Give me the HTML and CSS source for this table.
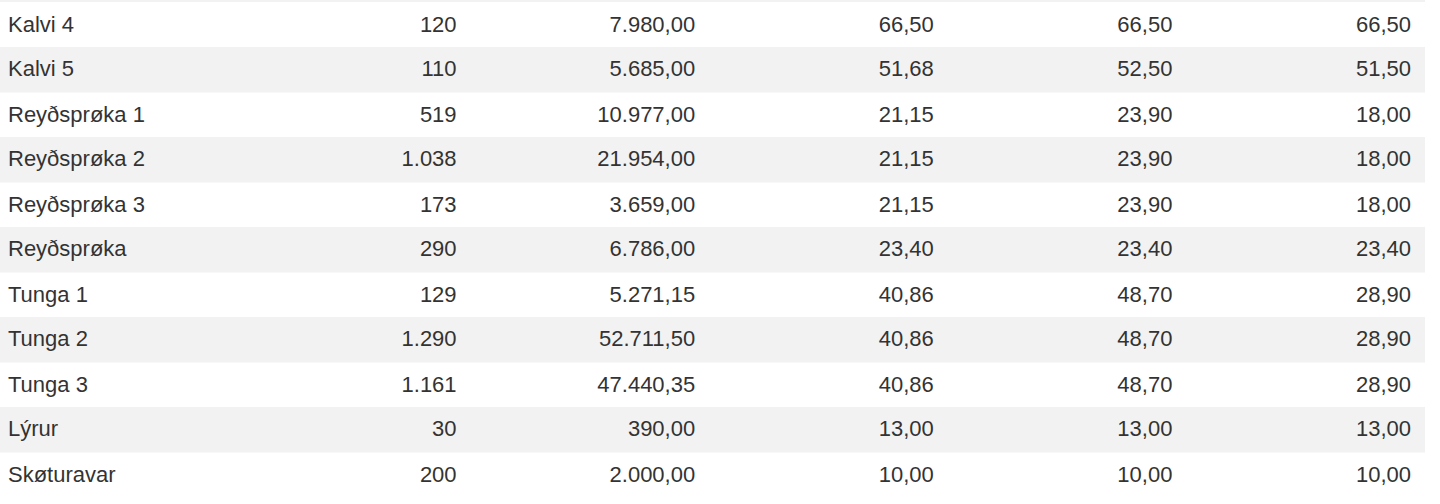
FILE: index.html
```html
<!DOCTYPE html>
<html>
<head>
<meta charset="utf-8">
<link rel="stylesheet" href="styles.css">
</head>
<body>
<div class="prev-row"></div>
<table class="prices">
  <colgroup>
    <col class="c-name"><col class="c-num"><col class="c-num"><col class="c-num"><col class="c-num"><col class="c-num">
  </colgroup>
  <tbody>
    <tr><td>Kalvi 4</td><td>120</td><td>7.980,00</td><td>66,50</td><td>66,50</td><td>66,50</td></tr>
    <tr><td>Kalvi 5</td><td>110</td><td>5.685,00</td><td>51,68</td><td>52,50</td><td>51,50</td></tr>
    <tr><td>Reyðsprøka 1</td><td>519</td><td>10.977,00</td><td>21,15</td><td>23,90</td><td>18,00</td></tr>
    <tr><td>Reyðsprøka 2</td><td>1.038</td><td>21.954,00</td><td>21,15</td><td>23,90</td><td>18,00</td></tr>
    <tr><td>Reyðsprøka 3</td><td>173</td><td>3.659,00</td><td>21,15</td><td>23,90</td><td>18,00</td></tr>
    <tr><td>Reyðsprøka</td><td>290</td><td>6.786,00</td><td>23,40</td><td>23,40</td><td>23,40</td></tr>
    <tr><td>Tunga 1</td><td>129</td><td>5.271,15</td><td>40,86</td><td>48,70</td><td>28,90</td></tr>
    <tr><td>Tunga 2</td><td>1.290</td><td>52.711,50</td><td>40,86</td><td>48,70</td><td>28,90</td></tr>
    <tr><td>Tunga 3</td><td>1.161</td><td>47.440,35</td><td>40,86</td><td>48,70</td><td>28,90</td></tr>
    <tr><td>Lýrur</td><td>30</td><td>390,00</td><td>13,00</td><td>13,00</td><td>13,00</td></tr>
    <tr><td>Skøturavar</td><td>200</td><td>2.000,00</td><td>10,00</td><td>10,00</td><td>10,00</td></tr>
  </tbody>
</table>
</body>
</html>
```

FILE: styles.css
```css
html, body {
  margin: 0;
  padding: 0;
  background: #ffffff;
}
body {
  font-family: "Liberation Sans", Arial, Helvetica, sans-serif;
  font-size: 22px;
  color: #333333;
}
.prev-row {
  width: 1425px;
  height: 2px;
  background: #f2f2f2;
}
.prices {
  width: 1425px;
  border-collapse: collapse;
  table-layout: fixed;
}
.c-name { width: 232px; }
.c-num { width: 238.6px; }
.prices td {
  height: 45px;
  padding: 0 14px 0 8px;
  box-sizing: border-box;
  text-align: right;
  vertical-align: middle;
  white-space: nowrap;
}
.prices td:first-child {
  text-align: left;
}
.prices tr:nth-child(even) td {
  background: #f2f2f2;
  border-bottom: 1px solid #f8f8f8;
}
```
